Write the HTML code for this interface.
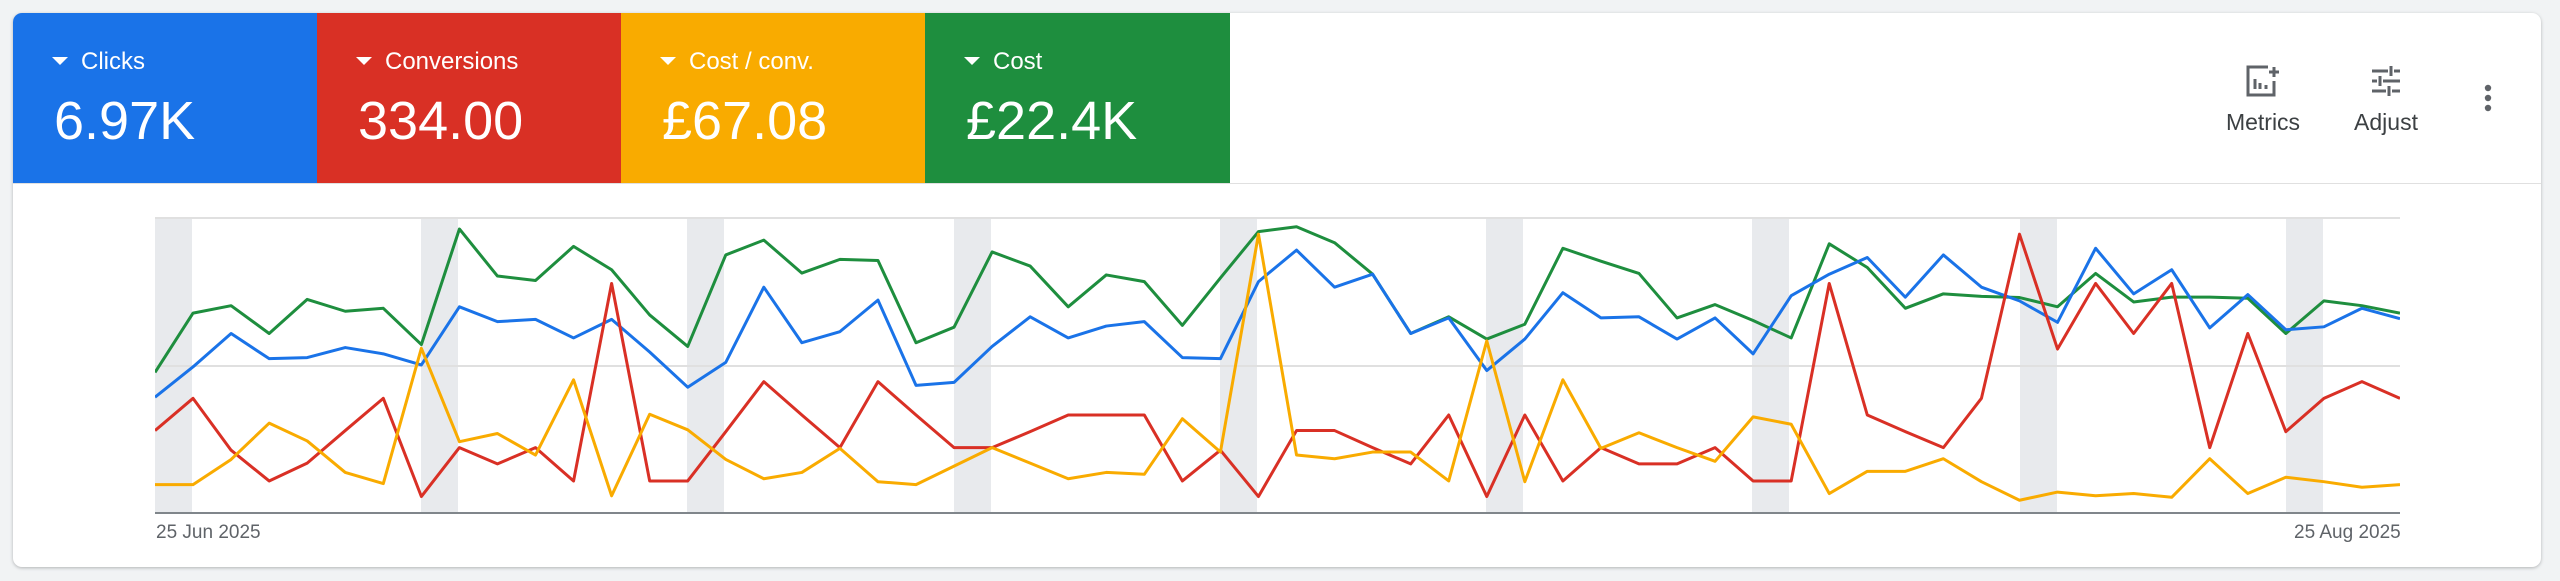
<!DOCTYPE html>
<html><head><meta charset="utf-8"><style>
html,body{margin:0;padding:0;width:2560px;height:581px;background:#f1f3f4;overflow:hidden;font-family:"Liberation Sans",Arial,sans-serif}
.card{position:absolute;left:13px;top:13px;width:2528px;height:554px;background:#fff;border-radius:9px;box-shadow:0 1px 3px rgba(60,64,67,.35);overflow:hidden}
.tile{position:absolute;top:0;height:170px;width:304px;color:#fff}
.tile .lab{position:absolute;left:39px;top:35px;font-size:24px;line-height:28px}
.tile .lab:before{content:"";display:inline-block;width:0;height:0;border-left:8px solid transparent;border-right:8px solid transparent;border-top:8px solid #fff;margin-right:13px;vertical-align:4px}
.tile .val{position:absolute;left:41px;top:78px;font-size:54px;line-height:60px}
.sep{position:absolute;left:0;top:170px;width:100%;height:1px;background:#e0e0e0}
.btn{position:absolute;color:#3c4043;font-size:23px;text-align:center}
.date{position:absolute;top:522px;font-size:19px;color:#5f6368}
</style></head><body>
<div class="card">
<div class="tile" style="left:0;background:#1a73e8"><div class="lab">Clicks</div><div class="val">6.97K</div></div>
<div class="tile" style="left:304px;background:#d93025"><div class="lab">Conversions</div><div class="val">334.00</div></div>
<div class="tile" style="left:608px;background:#f9ab00"><div class="lab">Cost / conv.</div><div class="val">£67.08</div></div>
<div class="tile" style="left:912px;width:305px;background:#1e8e3e"><div class="lab">Cost</div><div class="val">£22.4K</div></div>
<div class="sep"></div>
<svg style="position:absolute;left:2233px;top:52px" width="34" height="32" viewBox="0 0 34 32" fill="none" stroke="#5f6368" stroke-width="3"><path d="M22 2H2v28h26V16"/><path d="M9 14v10M14 18v6M20 20v4M28 2v10M23 7h10"/></svg>
<div class="btn" style="left:2203px;top:96px;width:94px">Metrics</div>
<svg style="position:absolute;left:2357px;top:52px" width="32" height="32" viewBox="0 0 32 32" fill="none" stroke="#5f6368" stroke-width="3"><path d="M2 6h16M24 6h6M21 1v10M2 16h5M13 16h17M10 11v10M2 26h14M22 26h8M19 21v10"/></svg>
<div class="btn" style="left:2328px;top:96px;width:90px">Adjust</div>
<svg style="position:absolute;left:2469px;top:71px" width="12" height="30" viewBox="0 0 12 30" fill="#5f6368"><circle cx="6" cy="4" r="3.2"/><circle cx="6" cy="14" r="3.2"/><circle cx="6" cy="24" r="3.2"/></svg>
</div>
<svg style="position:absolute;left:0;top:0" width="2560" height="581">
<g fill="#e8eaed">
<rect x="155" y="218" width="37" height="295"/><rect x="421" y="218" width="37" height="295"/><rect x="687" y="218" width="37" height="295"/><rect x="954" y="218" width="37" height="295"/><rect x="1220" y="218" width="37" height="295"/><rect x="1486" y="218" width="37" height="295"/><rect x="1752" y="218" width="37" height="295"/><rect x="2020" y="218" width="37" height="295"/><rect x="2286" y="218" width="37" height="295"/>
</g>
<line x1="155" y1="218" x2="2400" y2="218" stroke="#e0e0e0" stroke-width="2"/>
<line x1="155" y1="366" x2="2400" y2="366" stroke="#e0e0e0" stroke-width="2"/>
<line x1="155" y1="513" x2="2400" y2="513" stroke="#80868b" stroke-width="2"/>
</svg>
<svg style="position:absolute;left:155px;top:0" width="2245" height="581" viewBox="0 0 59 1568" preserveAspectRatio="none" fill="none" stroke-linejoin="round">
<polyline vector-effect="non-scaling-stroke" stroke="#1e8e3e" stroke-width="3" points="0,1005 1,845 2,825 3,900 4,808 5,840 6,832 7,930 8,618 9,745 10,757 11,665 12,728 13,850 14,935 15,688 16,648 17,737 18,700 19,703 20,925 21,883 22,680 23,718 24,828 25,742 26,760 27,878 28,750 29,625 30,612 31,655 32,740 33,900 34,855 35,915 36,875 37,670 38,705 39,738 40,858 41,822 42,865 43,912 44,658 45,722 46,832 47,793 48,800 49,803 50,828 51,738 52,815 53,802 54,802 55,805 56,900 57,812 58,825 59,845"/>
<polyline vector-effect="non-scaling-stroke" stroke="#1a73e8" stroke-width="3" points="0,1072 1,990 2,900 3,968 4,965 5,938 6,955 7,985 8,828 9,868 10,862 11,912 12,862 13,950 14,1045 15,978 16,775 17,925 18,895 19,810 20,1040 21,1032 22,935 23,855 24,912 25,880 26,868 27,965 28,968 29,760 30,675 31,775 32,740 33,900 34,858 35,1000 36,915 37,790 38,858 39,855 40,915 41,858 42,955 43,798 44,740 45,695 46,802 47,688 48,775 49,812 50,870 51,670 52,793 53,728 54,885 55,795 56,890 57,882 58,832 59,860"/>
<polyline vector-effect="non-scaling-stroke" stroke="#d93025" stroke-width="3" points="0,1162 1,1075 2,1215 3,1298 4,1250 5,1162 6,1075 7,1340 8,1208 9,1252 10,1208 11,1298 12,765 13,1298 14,1298 15,1165 16,1030 17,1120 18,1208 19,1030 20,1120 21,1208 22,1208 23,1165 24,1120 25,1120 26,1120 27,1298 28,1215 29,1340 30,1162 31,1162 32,1208 33,1252 34,1120 35,1340 36,1120 37,1298 38,1208 39,1252 40,1252 41,1208 42,1298 43,1298 44,765 45,1120 46,1165 47,1208 48,1075 49,632 50,942 51,765 52,900 53,765 54,1208 55,900 56,1165 57,1075 58,1030 59,1075"/>
<polyline vector-effect="non-scaling-stroke" stroke="#f9ab00" stroke-width="3" points="0,1308 1,1308 2,1240 3,1142 4,1190 5,1275 6,1305 7,940 8,1192 9,1170 10,1228 11,1025 12,1338 13,1118 14,1160 15,1240 16,1292 17,1275 18,1210 19,1300 20,1308 21,1258 22,1208 23,1250 24,1292 25,1275 26,1280 27,1130 28,1220 29,632 30,1228 31,1238 32,1220 33,1220 34,1298 35,920 36,1300 37,1025 38,1210 39,1168 40,1208 41,1245 42,1125 43,1145 44,1332 45,1272 46,1272 47,1238 48,1300 49,1350 50,1328 51,1338 52,1332 53,1342 54,1238 55,1332 56,1288 57,1300 58,1315 59,1308"/>
</svg>
<div class="date" style="left:156px">25 Jun 2025</div>
<div class="date" style="left:2294px">25 Aug 2025</div>
</body></html>
